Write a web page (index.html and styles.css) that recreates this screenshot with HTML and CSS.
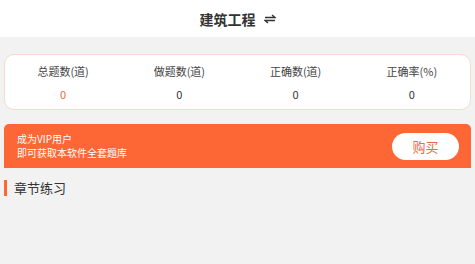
FILE: index.html
```html
<!DOCTYPE html>
<html lang="zh">
<head>
<meta charset="utf-8">
<link rel="stylesheet" href="styles.css">
</head>
<body>
<header class="topbar">
  <span class="title">建筑工程</span>
  <svg class="swap" width="12" height="10" viewBox="0 0 12 10"><path d="M1 3.5H11L8 1M11 6.5H1L4 9" fill="none" stroke="#333" stroke-width="1.4"/></svg>
</header>
<main class="content">
  <section class="stats">
    <div class="stat"><div class="label">总题数(道)</div><div class="value accent">0</div></div>
    <div class="stat"><div class="label">做题数(道)</div><div class="value">0</div></div>
    <div class="stat"><div class="label">正确数(道)</div><div class="value">0</div></div>
    <div class="stat"><div class="label">正确率(%)</div><div class="value">0</div></div>
  </section>
  <section class="vip">
    <div class="vip-text">
      <div>成为VIP用户</div>
      <div>即可获取本软件全套题库</div>
    </div>
    <button class="buy">购买</button>
  </section>
  <h2 class="section-title">章节练习</h2>
</main>
</body>
</html>
```
FILE: styles.css
```css
* { box-sizing: border-box; }
html, body { margin: 0; padding: 0; }
body {
  width: 475px;
  height: 264px;
  background: #f2f2f2;
  font-family: "Noto Sans CJK SC", "Noto Sans", sans-serif;
  color: #333;
  overflow: hidden;
}
.topbar {
  height: 37px;
  background: #fff;
  display: flex;
  align-items: center;
  justify-content: center;
  gap: 8px;
}
.title {
  font-size: 14px;
  font-weight: bold;
  color: #333;
  line-height: 1;
}
.swap { display: block; margin-top: 1px; }
.content {
  padding: 17px 4px 0 4px;
}
.stats {
  height: 56px;
  background: #fff;
  border: 1px solid #f7d9cd;
  border-radius: 10px;
  display: grid;
  grid-template-columns: repeat(4, 1fr);
  align-items: center;
}
.stat {
  display: flex;
  flex-direction: column;
  align-items: center;
  gap: 7px;
  padding-top: 1px;
}
.label {
  font-size: 11px;
  line-height: 16px;
  color: #444;
}
.value {
  font-size: 11px;
  line-height: 16px;
  color: #333;
}
.value.accent { color: #ec6a43; }
.vip {
  margin-top: 14px;
  height: 44px;
  background: #fd6635;
  border-radius: 5px 5px 0 0;
  display: flex;
  align-items: center;
  justify-content: space-between;
  padding: 0 12px 0 13px;
}
.vip-text {
  color: #fff;
  font-size: 10px;
  line-height: 14px;
}
.buy {
  width: 67px;
  height: 27px;
  border: none;
  border-radius: 14px;
  background: #fff;
  color: #ec6a43;
  font-family: "Noto Sans CJK SC", sans-serif;
  font-size: 13px;
  padding: 0;
}
.section-title {
  margin: 12px 0 0 0;
  font-size: 13px;
  font-weight: normal;
  line-height: 16px;
  color: #333;
  border-left: 3px solid #fd6635;
  padding-left: 7px;
}
```
